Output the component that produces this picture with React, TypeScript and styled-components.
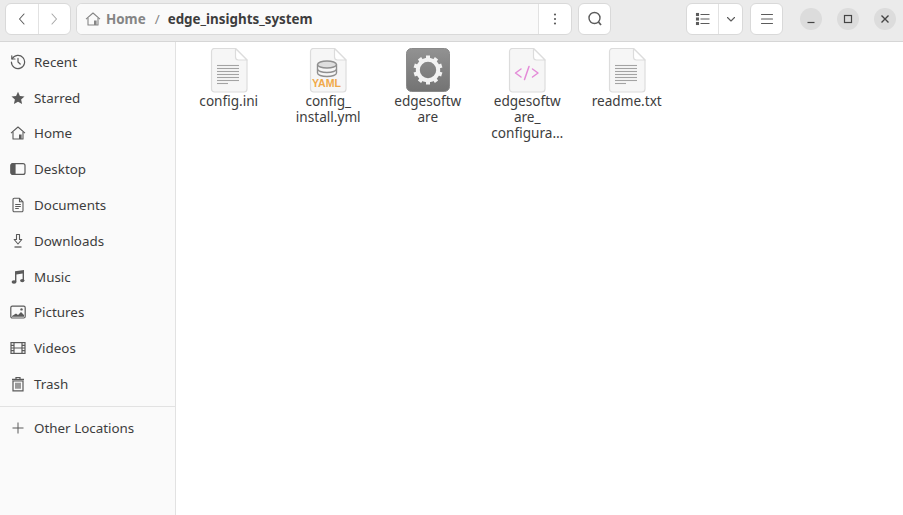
import { ReactElement, ReactNode } from 'react';
import styled, { createGlobalStyle } from 'styled-components';

const GlobalStyle = createGlobalStyle`
  html, body {
    margin: 0;
    padding: 0;
    height: 100%;
    overflow: hidden;
    background: #fff;
    font-family: 'Noto Sans', 'Open Sans', sans-serif;
    color: #3d3d3d;
  }
`;

const Styled = {
  Window: styled.div`
    display: flex;
    flex-direction: column;
    width: 903px;
    height: 515px;
  `,
  HeaderBar: styled.header`
    display: flex;
    align-items: flex-start;
    box-sizing: border-box;
    height: 42px;
    padding: 3px 7px 0 5px;
    background: #ebebeb;
    border-bottom: 1px solid #d6d6d6;
  `,
  ButtonGroup: styled.div<{ $width: number; $left?: number }>`
    display: flex;
    flex: none;
    box-sizing: border-box;
    width: ${(p) => p.$width}px;
    height: 32px;
    margin-left: ${(p) => p.$left ?? 0}px;
    background: #fff;
    border: 1px solid #d9d9d9;
    border-radius: 6px;
    overflow: hidden;
  `,
  HeaderButton: styled.div<{ $divider?: boolean; $width?: number }>`
    display: flex;
    align-items: center;
    justify-content: center;
    flex: ${(p) => (p.$width ? `0 0 ${p.$width}px` : '1')};
    color: #5c5c5c;
    border-left: ${(p) => (p.$divider ? '1px solid #e2e2e2' : 'none')};
  `,
  BackArea: styled.div`
    display: flex;
    flex: 1;
    background: #fafafa;
  `,
  PathBar: styled.div`
    display: flex;
    flex: 1;
    align-items: center;
    padding-left: 8px;
    font-size: 13.4px;
    font-weight: 700;
  `,
  HomeCrumb: styled.span`
    display: flex;
    align-items: center;
    gap: 5px;
    color: #858585;
  `,
  Slash: styled.span`
    margin: 0 8px 0 9px;
    color: #858585;
    font-weight: 400;
  `,
  Current: styled.span`
    color: #3d3d3d;
  `,
  WindowControls: styled.div`
    display: flex;
    gap: 15px;
    margin: 5px 0 0 17px;
  `,
  WindowButton: styled.div`
    display: flex;
    align-items: center;
    justify-content: center;
    width: 22px;
    height: 22px;
    border-radius: 50%;
    background: #dcdcdc;
    color: #444;
  `,
  Body: styled.div`
    display: flex;
    flex: 1;
    min-height: 0;
  `,
  Sidebar: styled.nav`
    flex: none;
    box-sizing: border-box;
    width: 176px;
    padding-top: 2px;
    background: #fafafa;
    border-right: 1px solid #e2e2e2;
  `,
  SideRow: styled.div`
    display: flex;
    align-items: center;
    height: 35.8px;
    padding-left: 10px;
    gap: 8px;
    font-size: 13.4px;
    color: #3d3d3d;
  `,
  SideIcon: styled.span`
    display: flex;
    flex: none;
    justify-content: center;
    width: 16px;
    color: #5a5a5a;
  `,
  Separator: styled.hr`
    height: 1px;
    margin: 4px 0 3.5px;
    border: 0;
    background: #e2e2e2;
  `,
  Files: styled.main`
    display: grid;
    grid-template-columns: repeat(5, 99.5px);
    align-content: start;
    flex: 1;
    padding: 6px 0 0 3px;
    background: #fff;
  `,
  FileItem: styled.div`
    display: flex;
    flex-direction: column;
    align-items: center;
  `,
  FileIcon: styled.svg`
    display: block;
    width: 48px;
    height: 45px;
  `,
  FileName: styled.div`
    width: 84px;
    font-size: 13.6px;
    line-height: 16px;
    text-align: center;
    color: #3d3d3d;
  `,
  YamlBadge: styled.text`
    font-family: 'Liberation Sans', sans-serif;
    font-size: 11px;
    font-weight: 700;
    fill: #f0a94a;
  `,
};

const NavIcon = ({ d, color }: { d: string; color: string }): ReactElement => (
  <svg width="16" height="16" viewBox="0 0 16 16" fill="none" stroke={color} strokeWidth="1.1" strokeLinecap="round" strokeLinejoin="round">
    <path d={d} />
  </svg>
);

const HomeIcon = ({ color }: { color: string }): ReactElement => (
  <svg width="16" height="16" viewBox="0 0 16 16" fill="none" stroke={color} strokeWidth="1.1" strokeLinejoin="round">
    <path d="M1 8.2 8 2l7 6.2" />
    <path d="M3 7v7h10V7" />
    <rect x="9" y="9.5" width="2.6" height="4.5" fill={color} stroke="none" />
  </svg>
);

const sideIcons: Record<string, ReactNode> = {
  Recent: (
    <svg width="16" height="16" viewBox="0 0 16 16" fill="none" stroke="currentColor" strokeWidth="1.2" strokeLinecap="round">
      <path d="M2.2 4.8A6.6 6.6 0 1 1 1.4 8" />
      <path d="M1.8 1.8v3.2H5" />
      <path d="M8 4.4V8l2.2 2" />
    </svg>
  ),
  Starred: (
    <svg width="16" height="16" viewBox="0 0 16 16" fill="currentColor">
      <path d="M8 1.8 9.9 6l4.6.5-3.4 3.1 1 4.5L8 11.8l-4.1 2.3 1-4.5L1.5 6.5 6.1 6z" />
    </svg>
  ),
  Home: <HomeIcon color="currentColor" />,
  Desktop: (
    <svg width="16" height="16" viewBox="0 0 16 16" fill="none" stroke="currentColor" strokeWidth="1.2">
      <rect x="1" y="2.6" width="14" height="10.8" rx="2" />
      <path d="M1 4.6a2 2 0 0 1 2-2h2v10.800H3a2 2 0 0 1-2-2z" fill="currentColor" />
    </svg>
  ),
  Documents: (
    <svg width="16" height="16" viewBox="0 0 16 16" fill="none" stroke="currentColor" strokeWidth="1.1" strokeLinejoin="round">
      <path d="M3 2.5a1.2 1.2 0 0 1 1.2-1.2h5.300L13 4.800v8.700a1.200 1.200 0 0 1-1.200 1.200H4.200A1.200 1.200 0 0 1 3 13.500z" />
      <path d="M9.500 1.300v3.500H13" />
      <path d="M5.200 7.500h5.600M5.200 9.500h5.600M5.200 11.500h3.600" strokeWidth="1.200" />
    </svg>
  ),
  Downloads: (
    <svg width="16" height="16" viewBox="0 0 16 16" fill="none" stroke="currentColor" strokeWidth="1.100" strokeLinejoin="round">
      <path d="M6.500 1.500h3v5h2.300L8 11 4.200 6.500h2.300z" />
      <path d="M4.500 14h7" strokeWidth="1.300" />
    </svg>
  ),
  Music: (
    <svg width="16" height="16" viewBox="0 0 16 16" fill="currentColor">
      <path d="M5 2.200 14 1v10.500h-1.400V4.500L6.400 5.400v7.800H5z" />
      <ellipse cx="4" cy="13" rx="2.400" ry="1.800" />
      <ellipse cx="12.300" cy="11.600" rx="2.200" ry="1.700" />
    </svg>
  ),
  Pictures: (
    <svg width="16" height="16" viewBox="0 0 16 16" fill="none" stroke="currentColor" strokeWidth="1.200">
      <rect x="0.800" y="2.200" width="14.400" height="11.800" rx="1.500" />
      <path d="M2 12.800h12V11l-3-3-3 3-2-1.500-4 2.500z" fill="currentColor" stroke="none" />
      <circle cx="11.500" cy="5.400" r="1.200" fill="currentColor" stroke="none" />
    </svg>
  ),
  Videos: (
    <svg width="16" height="16" viewBox="0 0 16 16" fill="none" stroke="currentColor" strokeWidth="1.200">
      <rect x="1" y="2.600" width="14" height="10.800" />
      <path d="M4 2.600v10.800M12 2.600v10.800M4 8h8M1 5.300h3M1 8h3M1 10.700h3M12 5.300h3M12 8h3M12 10.700h3" />
    </svg>
  ),
  Trash: (
    <svg width="16" height="16" viewBox="0 0 16 16" fill="none" stroke="currentColor" strokeWidth="1.200">
      <path d="M2 3.500h12" strokeWidth="1.500" />
      <path d="M6 3.200V1.500h4v1.700" />
      <path d="M3 5h10v9.800H3z" />
      <path d="M6 6.800v6M8 6.800v6M10 6.800v6" />
    </svg>
  ),
  'Other Locations': (
    <svg width="16" height="16" viewBox="0 0 16 16" fill="none" stroke="currentColor" strokeWidth="1">
      <path d="M8 2.500v11M2.500 8h11" />
    </svg>
  ),
};

// blank page with the folded corner, 36x44 inside the 48 box
const PageBase = ({ children }: { children?: ReactNode }): ReactElement => (
  <Styled.FileIcon viewBox="0 0 48 45" fill="none">
    <path d="M6.500 3.500a3 3 0 0 1 3-3H30.500L42 12v29a3 3 0 0 1-3 3H9.500a3 3 0 0 1-3-3z" fill="#f6f6f6" stroke="#dcdcdc" strokeWidth="1.200" />
    <path d="M30.500 .5V9a3 3 0 0 0 3 3H42z" fill="#fff" stroke="#dcdcdc" strokeWidth="1.200" strokeLinejoin="round" />
    {children}
  </Styled.FileIcon>
);

const TextLines = (): ReactElement => (
  <g stroke="#a3a3a3" strokeWidth="1.100">
    {[17.5, 20.5, 23.5, 26.5, 29.5, 32.5].map((y) => (
      <path key={y} d={`M12 ${y}h22`} />
    ))}
    <path d="M12 35.500h11" />
  </g>
);

const iniIcon = (
  <PageBase>
    <TextLines />
  </PageBase>
);

const yamlIcon = (
  <PageBase>
    <g stroke="#8f8f8f" strokeWidth="1.400" fill="none">
      <ellipse cx="23" cy="16.500" rx="9.500" ry="3.500" fill="#dedede" />
      <path d="M13.500 16.500v8.500c0 2 4.300 3.500 9.500 3.500s9.500-1.500 9.500-3.500v-8.500" />
      <path d="M13.500 21c0 2 4.300 3.500 9.500 3.500s9.500-1.500 9.500-3.500" />
    </g>
    <Styled.YamlBadge x="8" y="39" textLength="29" lengthAdjust="spacingAndGlyphs">
      YAML
    </Styled.YamlBadge>
  </PageBase>
);

const gearTeeth = Array.from({ length: 10 }, (_, i) => i * 36);

const gearIcon = (
  <Styled.FileIcon viewBox="0 0 48 45">
    <defs>
      <linearGradient id="gearBg" x1="0" y1="0" x2="0" y2="1">
        <stop offset="0" stopColor="#929292" />
        <stop offset="1" stopColor="#737373" />
      </linearGradient>
    </defs>
    <rect x="2.500" y="0.500" width="43" height="43" rx="5" fill="url(#gearBg)" stroke="#8a8a8a" />
    <g fill="#f2f2f2">
      {gearTeeth.map((deg) => (
        <rect key={deg} x="22" y="7.500" width="4" height="5" transform={`rotate(${deg} 24 22)`} />
      ))}
    </g>
    <circle cx="24" cy="22" r="10.200" fill="none" stroke="#f2f2f2" strokeWidth="4" />
  </Styled.FileIcon>
);

const codeIcon = (
  <PageBase>
    <g stroke="#e48ad8" strokeWidth="1.500" fill="none" strokeLinecap="round" strokeLinejoin="round">
      <path d="M18 21 12.500 25l5.500 4" />
      <path d="M26 18.500 21.500 31.500" />
      <path d="M29.500 21 35 25l-5.500 4" />
    </g>
  </PageBase>
);

const sideTop = ['Recent', 'Starred', 'Home', 'Desktop', 'Documents', 'Downloads', 'Music', 'Pictures', 'Videos', 'Trash'];

const files: { name: ReactNode; icon: ReactNode }[] = [
  { name: 'config.ini', icon: iniIcon },
  { name: <>config_<br />install.yml</>, icon: yamlIcon },
  { name: <>edgesoftw<br />are</>, icon: gearIcon },
  { name: <>edgesoftw<br />are_<br />configura…</>, icon: codeIcon },
  { name: 'readme.txt', icon: iniIcon },
];

export default function App(): ReactElement {
  return (
    <Styled.Window>
      <GlobalStyle />
      <Styled.HeaderBar>
        <Styled.ButtonGroup $width={66}>
          <Styled.HeaderButton>
            <NavIcon d="M10 3 5.500 8l4.500 5" color="#5c5c5c" />
          </Styled.HeaderButton>
          <Styled.HeaderButton $divider>
            <NavIcon d="M6 3l4.500 5L6 13" color="#a8a8a8" />
          </Styled.HeaderButton>
        </Styled.ButtonGroup>
        <Styled.ButtonGroup $width={496} $left={5}>
          <Styled.BackArea>
            <Styled.PathBar>
              <Styled.HomeCrumb>
                <HomeIcon color="#858585" />
                Home
              </Styled.HomeCrumb>
              <Styled.Slash>/</Styled.Slash>
              <Styled.Current>edge_insights_system</Styled.Current>
            </Styled.PathBar>
          </Styled.BackArea>
          <Styled.HeaderButton $divider $width={32}>
            <svg width="16" height="16" viewBox="0 0 16 16" fill="#5c5c5c">
              <circle cx="8" cy="3.500" r="1.100" />
              <circle cx="8" cy="8" r="1.100" />
              <circle cx="8" cy="12.500" r="1.100" />
            </svg>
          </Styled.HeaderButton>
        </Styled.ButtonGroup>
        <Styled.ButtonGroup $width={33} $left={6}>
          <Styled.HeaderButton>
            <svg width="16" height="16" viewBox="0 0 16 16" fill="none" stroke="#5c5c5c" strokeWidth="1.400">
              <circle cx="7.500" cy="7" r="5.500" />
              <path d="M11.500 11 14 14" strokeWidth="1.800" />
            </svg>
          </Styled.HeaderButton>
        </Styled.ButtonGroup>
        <Styled.ButtonGroup $width={57} $left={75}>
          <Styled.HeaderButton>
            <svg width="16" height="16" viewBox="0 0 16 16" stroke="#5c5c5c" strokeWidth="1.100" fill="#5c5c5c">
              <path d="M5.500 3.500h9M5.500 8h9M5.500 12.500h9" fill="none" />
              <rect x="1.500" y="2.500" width="2" height="2" />
              <rect x="1.500" y="7" width="2" height="2" />
              <rect x="1.500" y="11.500" width="2" height="2" />
            </svg>
          </Styled.HeaderButton>
          <Styled.HeaderButton $divider $width={23}>
            <NavIcon d="M4.500 6.500 8 10l3.500-3.500" color="#5c5c5c" />
          </Styled.HeaderButton>
        </Styled.ButtonGroup>
        <Styled.ButtonGroup $width={33} $left={7}>
          <Styled.HeaderButton>
            <NavIcon d="M2.500 3.500h11M2.500 8h11M2.500 12.500h11" color="#5c5c5c" />
          </Styled.HeaderButton>
        </Styled.ButtonGroup>
        <Styled.WindowControls>
          <Styled.WindowButton>
            <svg width="12" height="12" viewBox="0 0 12 12" stroke="#444" strokeWidth="1.200">
              <path d="M2.500 9.500h7" />
            </svg>
          </Styled.WindowButton>
          <Styled.WindowButton>
            <svg width="12" height="12" viewBox="0 0 12 12" fill="none" stroke="#444" strokeWidth="1.200">
              <rect x="2.500" y="2.500" width="7" height="7" />
            </svg>
          </Styled.WindowButton>
          <Styled.WindowButton>
            <svg width="12" height="12" viewBox="0 0 12 12" stroke="#444" strokeWidth="1.400">
              <path d="M2.500 2.500l7 7M9.500 2.500l-7 7" />
            </svg>
          </Styled.WindowButton>
        </Styled.WindowControls>
      </Styled.HeaderBar>
      <Styled.Body>
        <Styled.Sidebar>
          {sideTop.map((label) => (
            <Styled.SideRow key={label}>
              <Styled.SideIcon>{sideIcons[label]}</Styled.SideIcon>
              {label}
            </Styled.SideRow>
          ))}
          <Styled.Separator />
          <Styled.SideRow>
            <Styled.SideIcon>{sideIcons['Other Locations']}</Styled.SideIcon>
            Other Locations
          </Styled.SideRow>
        </Styled.Sidebar>
        <Styled.Files>
          {files.map((file, i) => (
            <Styled.FileItem key={i}>
              {file.icon}
              <Styled.FileName>{file.name}</Styled.FileName>
            </Styled.FileItem>
          ))}
        </Styled.Files>
      </Styled.Body>
    </Styled.Window>
  );
}
